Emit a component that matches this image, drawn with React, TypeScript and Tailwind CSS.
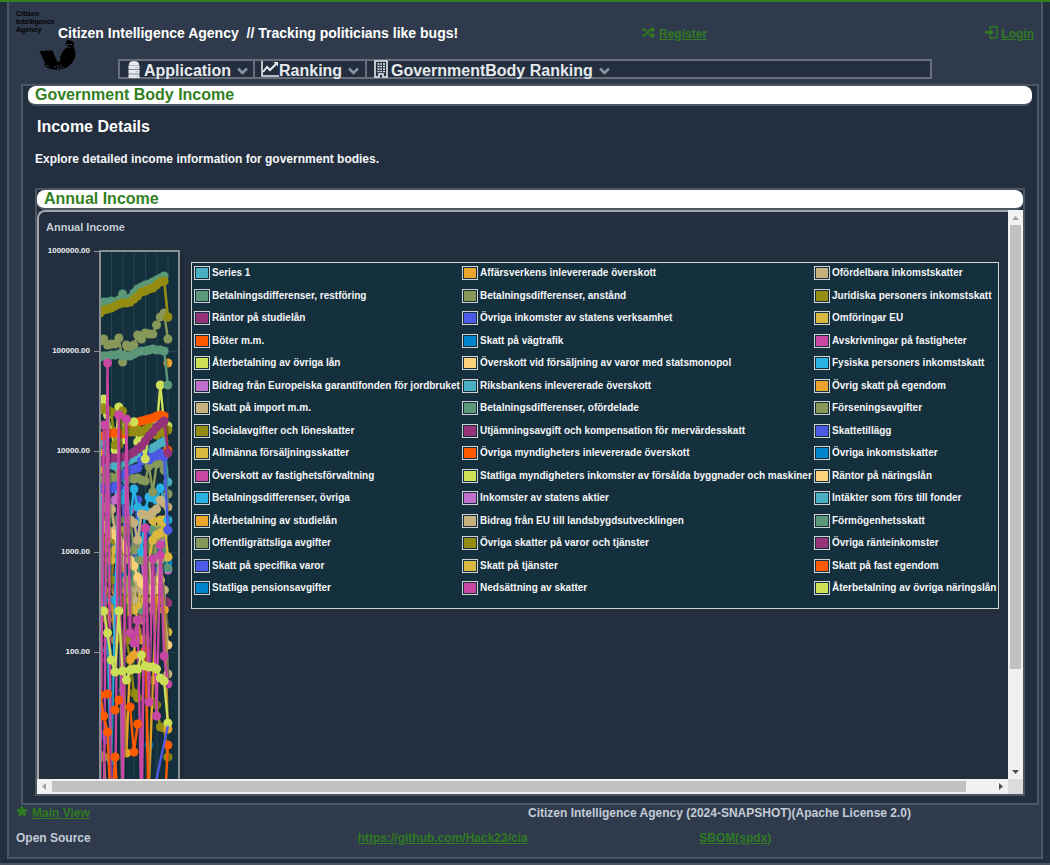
import React from "react";
import { FaRandom, FaStar } from "react-icons/fa";

const TEAL = "#4bafc4";
const GREEN = "#5b9779";
const PURPLE = "#943378";
const RED = "#ff5a00";
const LIME = "#ccdf56";
const VIOLET = "#c070cc";
const TAN = "#c6b07c";
const OLIVE = "#958c12";
const GOLD = "#dab83f";
const MAGENTA = "#c747a3";
const CYAN = "#29b1e2";
const ORANGE = "#eba42b";
const SAGE = "#87985a";
const BLUE = "#4d5ae5";
const AZURE = "#0085cc";
const PEACH = "#fdd07a";

const legend: [string, string][][] = [
  [[TEAL, "Series 1"], [ORANGE, "Affärsverkens inlevererade överskott"], [TAN, "Ofördelbara inkomstskatter"]],
  [[GREEN, "Betalningsdifferenser, restföring"], [SAGE, "Betalningsdifferenser, anstånd"], [OLIVE, "Juridiska personers inkomstskatt"]],
  [[PURPLE, "Räntor på studielån"], [BLUE, "Övriga inkomster av statens verksamhet"], [GOLD, "Omföringar EU"]],
  [[RED, "Böter m.m."], [AZURE, "Skatt på vägtrafik"], [MAGENTA, "Avskrivningar på fastigheter"]],
  [[LIME, "Återbetalning av övriga lån"], [PEACH, "Överskott vid försäljning av varor med statsmonopol"], [CYAN, "Fysiska personers inkomstskatt"]],
  [[VIOLET, "Bidrag från Europeiska garantifonden för jordbruket"], [TEAL, "Riksbankens inlevererade överskott"], [ORANGE, "Övrig skatt på egendom"]],
  [[TAN, "Skatt på import m.m."], [GREEN, "Betalningsdifferenser, ofördelade"], [SAGE, "Förseningsavgifter"]],
  [[OLIVE, "Socialavgifter och löneskatter"], [PURPLE, "Utjämningsavgift och kompensation för mervärdesskatt"], [BLUE, "Skattetillägg"]],
  [[GOLD, "Allmänna försäljningsskatter"], [RED, "Övriga myndigheters inlevererade överskott"], [AZURE, "Övriga inkomstskatter"]],
  [[MAGENTA, "Överskott av fastighetsförvaltning"], [LIME, "Statliga myndigheters inkomster av försålda byggnader och maskiner"], [PEACH, "Räntor på näringslån"]],
  [[CYAN, "Betalningsdifferenser, övriga"], [VIOLET, "Inkomster av statens aktier"], [TEAL, "Intäkter som förs till fonder"]],
  [[ORANGE, "Återbetalning av studielån"], [TAN, "Bidrag från EU till landsbygdsutvecklingen"], [GREEN, "Förmögenhetsskatt"]],
  [[SAGE, "Offentligrättsliga avgifter"], [OLIVE, "Övriga skatter på varor och tjänster"], [PURPLE, "Övriga ränteinkomster"]],
  [[BLUE, "Skatt på specifika varor"], [GOLD, "Skatt på tjänster"], [RED, "Skatt på fast egendom"]],
  [[AZURE, "Statliga pensionsavgifter"], [MAGENTA, "Nedsättning av skatter"], [LIME, "Återbetalning av övriga näringslån"]],
];

type Point = number | null;
const _ = null;

const series: [string, Point[]][] = [
  [ORANGE, [450, 470, 520, 560, 575, 610, 560, 640, 585, 560, 640, 600, 560, 570, 590, 600, 580, _, 363]],
  [GOLD, [480, 530, 572, 560, 610, 590, 530, 600, 620, 583, 605, 598, 560, 570, 520, 530, 520, 567, 557]],
  [GOLD, [755, 757, 820, _, 590, 550, 560, 600, 600, 600, 590, 620, 610, 590, 605, 600, 570, 590, 632]],
  [GREEN, [540, 550, 570, 560, 580, 600, 590, 560, 550, 600, 580, 590, 600, 570, 560, 580, 600, 590, _]],
  [VIOLET, [500, 520, 480, 510, 500, 495, 500, 560, 510, 570, 540, 560, 600, 590, 570, 580, 540, 560, 570]],
  [PURPLE, [660, 650, 640, 540, 600, 630, 690, 625, 620, 640, 630, 600, 640, 610, 560, 605, 590, 600, 603]],
  [AZURE, [440, 445, 490, 578, 579, 578, 577, 576, 560, 570, 560, 590, _, 745, _, 560, 550, 560, 563]],
  [BLUE, [735, 735, 740, 762, 820, _, 490, 560, 520, 560, 500, 530, 540, 530, 540, 560, 570, 550, 530]],
  [GREEN, [530, 540, 560, 550, 520, 560, 820, 520, 550, 570, 560, 610, 580, 560, 530, 560, 580, 550, 568]],
  [OLIVE, [500, 560, 600, 580, 540, 600, 600, 640, 660, 693, 698, 660, 640, 700, 702, 705, 727, 728, 757]],
  [SAGE, [500, 520, 540, 510, 530, 520, 540, 530, 520, 550, 540, 560, 550, 545, 550, 540, 530, 535, 494]],
  [GOLD, [560, 550, 540, 560, 550, 530, 545, 590, 600, 610, 605, 590, 600, 560, 540, 535, 533, 520, 557]],
  [TAN, [510, 508, 507, 509, 530, 545, 560, 580, 590, 600, 580, 590, 580, 560, 610, 580, 560, 590, 674]],
  [PEACH, [520, 525, 530, 533, 535, 540, 545, 550, 560, 566, 577, 583, 585, 590, 600, 590, 580, 610, 645]],
  [ORANGE, [570, 590, 620, 600, 640, 610, 640, 753, 659, 655, 620, 640, 640, 790, 680, 600, 600, 610, 729]],
  [CYAN, [500, 600, 650, 760, 600, 490, 500, 480, 520, 489, 507, 552, 510, 497, 498, 500, 488, 500, 520]],
  [TAN, [_, _, _, _, _, _, _, _, 520, 523, 540, 514, 515, 516, 512, 509, 500, 503, 507]],
  [SAGE, [480, 481, 480, 477, 478, 470, 476, 474, 478, 479, 478, 480, 481, 466, 492, 464, 463, 470, 494]],
  [TEAL, [443, 440, 465, 465, 466, 465, 463, 463, 460, 458, 457, 456, 454, 452, 448, 446, 443, 441, 482]],
  [BLUE, [487, 490, 488, 489, 486, 487, 475, 472, 470, 469, 468, 461, 455, 460, 457, 456, 453, 457, 530]],
  [LIME, [400, 399, 415, 430, 450, 407, 440, 425, 430, 422, 442, 440, 459, 430, 425, 430, 385, 424, 426]],
  [OLIVE, [410, 408, 410, 412, 445, 445, 411, 432, 432, 432, 431, 432, 430, 425, 433, 435, 432, 433, 430]],
  [RED, [436, 436, 434, 433, 433, 433, 434, 432, 430, 425, 422, 421, 420, 419, 418, 416, 415, 416, 450]],
  [OLIVE, [_, _, _, _, _, _, _, 431, 431, 431, 430, 431, 430, _, _, _, _, _, _]],
  [LIME, [_, _, _, _, _, _, _, _, _, 422, _, _, _, _, _, _, _, _, _]],
  [PURPLE, [462, 460, 460, 458, 458, 458, 457, 457, 454, 452, 449, 446, 441, 436, 432, 427, 424, 421, 453]],
  [SAGE, [341, 339, 345, 344, 344, 338, 362, 345, 347, 345, 335, 339, 333, 334, 334, 325, 317, 313, 339]],
  [GREEN, [357, 356, 356, 355, 355, 354, 355, 356, 356, 354, 352, 351, 351, 350, 349, 350, 350, 351, 385]],
  [GREEN, [304, 302, 302, 301, 302, 300, 294, 300, 298, 293, 289, 287, 285, 284, 282, 280, 278, 276, 317]],
  [OLIVE, [313, 310, 309, 308, 306, 304, 303, 303, 302, 299, 296, 292, 291, 289, 288, 285, 282, 281, 317]],
  [MAGENTA, [820, 425, _, _, _, _, _, _, _, _, _, _, _, _, _, _, _, _, _]],
  [MAGENTA, [_, 820, 363, 820, _, 415, 820, 419, 633, 643, 620, 820, 528, 702, 559, 716, 545, 656, 684]],
  [MAGENTA, [_, _, _, _, 820, 415, _, _, _, _, _, _, _, _, _, _, 555, _, _]],
  [RED, [695, 716, 732, 820, 757, 820, _, _, _, _, _, _, _, _, _, _, _, _, _]],
  [RED, [_, _, 694, _, 710, 700, _, _, 707, 752, 724, _, 650, 820, _, _, _, 820, 745]],
  [MAGENTA, [_, _, _, _, _, _, _, _, _, _, _, 820, 528, 702, _, _, _, _, _]],
  [LIME, [611, 611, 633, 660, 672, 611, 671, 680, 670, 669, 669, 655, 666, 667, 667, 669, 678, 681, 723]],
];

const px = (i: number) => 100 + i * 3.77;

function linePath(values: Point[]) {
  let d = "";
  let pen = false;
  values.forEach((v, i) => {
    if (v === null) {
      pen = false;
      return;
    }
    d += `${pen ? "L" : "M"}${px(i).toFixed(1)} ${v}`;
    pen = true;
  });
  return d;
}

function Chart() {
  const ticks: [number, string][] = [
    [251, "1000000.00"],
    [351, "100000.00"],
    [451, "10000.00"],
    [552, "1000.00"],
    [652, "100.00"],
  ];
  return (
    <svg className="block h-[540px] w-[145px] shrink-0" viewBox="39 239 145 540" role="img" aria-label="Annual Income chart">
      <defs>
        <clipPath id="plot">
          <rect x="100" y="251" width="79" height="540" />
        </clipPath>
      </defs>
      <rect x="180" y="253" width="3" height="540" fill="#1e2837" />
      <rect x="100" y="251" width="79" height="540" fill="#15303d" />
      {[111.5, 123, 134, 145.5, 157, 168].map((x) => (
        <path key={x} d={`M${x} 252V790`} stroke="#26434f" />
      ))}
      {ticks.map(([y, label]) => (
        <g key={y}>
          <path d={`M100 ${y + 0.5}H179`} stroke="#26434f" />
          <path d={`M94 ${y + 0.5}H99`} stroke="#8a9092" />
          <text x="90" y={y + 2} textAnchor="end" fill="#eef0f2" fontSize="8" fontWeight="700" fontFamily="Liberation Sans, sans-serif">
            {label}
          </text>
        </g>
      ))}
      <g clipPath="url(#plot)">
        {series.map(([color, values], s) => (
          <g key={s}>
            <path d={linePath(values)} fill="none" stroke="#0b1c26" strokeOpacity="0.25" strokeWidth="3" transform="translate(1.5 1.5)" />
            <path d={linePath(values)} fill="none" stroke={color} strokeWidth="2.4" strokeLinejoin="round" />
            {values.map((v, i) => (v === null ? null : <circle key={i} cx={px(i)} cy={v} r="4.5" fill={color} />))}
          </g>
        ))}
        <path d="M154 790L167.900 726" stroke={BLUE} strokeWidth="2.400" />
      </g>
      <path d="M100 790V251H179V790" fill="none" stroke="#8a9092" strokeWidth="2" />
    </svg>
  );
}

function Logo() {
  return (
    <div className="w-[42px] shrink-0 pt-2 text-[7px] leading-[8px] text-black">
      <div>Citizen</div>
      <div>Intelligence</div>
      <div>Agency</div>
      <svg className="ml-[22px] block h-9 w-10" viewBox="0 0 40 36" fill="#000" aria-hidden="true">
        <path d="M1.500 17L14.500 16.500L18 25L21 30L9 31L6 27Z" />
        <path d="M6 29C11 31 17 31 22 27C22 21 25 15 30 13L28 10C27 6 31 5 33 7C36 7 36.500 10 35.500 13C39 18 38 26 31 32C24 37 12 37 7 32Z" />
        <path d="M29 10.500H34M8 31.500L12 32.500M16 33L24 31M19 35L26 33M30 13L33 14" stroke="#56606c" strokeWidth="0.700" strokeDasharray="2 1" fill="none" />
      </svg>
    </div>
  );
}

function ServerIcon() {
  return (
    <svg className="mr-[3px] h-[18px] w-[14px]" viewBox="0 0 14 18" fill="#e6eaee" aria-hidden="true">
      <path d="M2 4C2 0 12 0 12 4V5H2Z" />
      <path d="M1.500 5.300H12.500V9.200H1.500ZM1.500 9.700H12.500V13.700H1.500ZM1.500 14.200H12.500V18H1.500Z" />
      <path d="M8.500 7.500H11M8.500 11.700H11M8.500 16H11" stroke="#a9b3be" strokeWidth="0.800" />
    </svg>
  );
}

function TrendIcon() {
  return (
    <svg className="h-[18px] w-[18px]" viewBox="0 0 18 18" fill="none" stroke="#e6eaee" strokeWidth="1.600" aria-hidden="true">
      <path d="M1 1V16H18" />
      <path d="M2 12L6 7L9 10L16 3" strokeWidth="2" />
      <path d="M12.500 2H17V6.500Z" fill="#e6eaee" stroke="none" />
    </svg>
  );
}

function BuildingIcon() {
  return (
    <svg className="mr-[3px] h-[18px] w-[14px]" viewBox="0 0 14 18" aria-hidden="true">
      <path d="M1 1H13V17H9V14H5V17H1Z" fill="none" stroke="#e6eaee" strokeWidth="1.600" />
      <path d="M3.500 4H5.500M6.300 4H8M9 4H11M3.500 6.500H5.500M6.300 6.500H8M9 6.500H11M3.500 9H5.500M6.300 9H8M9 9H11M3.500 11.500H5.500M6.300 11.500H8M9 11.500H11" stroke="#e6eaee" strokeWidth="1.500" />
    </svg>
  );
}

function LoginIcon() {
  return (
    <svg className="h-[13px] w-[13px]" viewBox="0 0 13 13" aria-hidden="true">
      <path d="M5 3V0.750H12.250V11.750H5V9.500" fill="none" stroke="currentColor" strokeWidth="1.300" />
      <path d="M0 5H4.500V2.500L9 6.250L4.500 10V7.500H0Z" fill="currentColor" />
    </svg>
  );
}

function Chevron() {
  return (
    <svg className="ml-[6px] h-[8px] w-[11px]" viewBox="0 0 11 8" fill="none" stroke="#8994a0" strokeWidth="2.600" aria-hidden="true">
      <path d="M1 1.500L5.500 6L10 1.500" />
    </svg>
  );
}

function MenuItem({ icon, label, className }: { icon: React.ReactNode; label: string; className: string }) {
  return (
    <button type="button" className={`flex h-4 items-center text-[16px] leading-4 text-[#e6eaee] ${className}`}>
      {icon}
      <span className="pt-[3px]">{label}</span>
      <span className="pt-[3px]">
        <Chevron />
      </span>
    </button>
  );
}

function Triangle({ d, color }: { d: string; color: string }) {
  return (
    <svg className="h-[15px] w-[15px] shrink-0" viewBox="0 0 15 15" fill={color} aria-hidden="true">
      <path d={d} />
    </svg>
  );
}

const link = "text-[#2f7a22] underline";

export default function App() {
  return (
    <div className="border-y-2 border-t-[#33801f] border-b-[#4a5462] bg-[#232e3e] px-[7px] pb-1 font-['Liberation_Sans',Arial,sans-serif] text-[12px] leading-4 font-bold text-[#c3ccd6]">
      <div className="border-x-2 border-b-2 border-[#4d5764] bg-[#2f3b4c] pb-[11px]">
        <header className="flex h-[57px] items-start pr-[7px] pl-[7px]">
          <Logo />
          <h1 className="pt-[22px] text-[14px] leading-[18px] whitespace-pre text-white">Citizen Intelligence Agency  // Tracking politicians like bugs!</h1>
          <div className="ml-auto flex w-[392px] justify-between pt-6">
            <a href="#register" className="flex gap-1 text-[#2f7a22]">
              <FaRandom className="text-[13px]" />
              <span className="underline">Register</span>
            </a>
            <a href="#login" className="flex gap-[3px] text-[#2f7a22]">
              <LoginIcon />
              <span className="underline">Login</span>
            </a>
          </div>
        </header>

        <nav className="mr-[109px] ml-[109px] flex h-5 border-2 border-[#666f7a] bg-[#232e3e]">
          <MenuItem icon={<ServerIcon />} label="Application" className="w-[135px] border-r-2 border-[#666f7a] pl-[7px]" />
          <MenuItem icon={<TrendIcon />} label="Ranking" className="w-[112px] border-r-2 border-[#666f7a] pl-[6px]" />
          <MenuItem icon={<BuildingIcon />} label="GovernmentBody Ranking" className="pl-[7px]" />
        </nav>

        <main className="mt-[5px] mr-[2px] ml-3 border-2 border-[#4d5764] bg-[#232e3e] pb-[7px]">
          <h2 className="mr-[5px] ml-[5px] h-5 rounded-lg border-b-2 border-[#4d5764] bg-white pl-[7px] text-[16px] leading-[18px] text-[#33801f]">Government Body Income</h2>
          <h3 className="mt-[11px] ml-[14px] text-[16px] leading-5 text-white">Income Details</h3>
          <p className="mt-[14px] ml-3 text-[#f4f6f8]">Explore detailed income information for government bodies.</p>

          <section className="mt-[21px] mr-3 ml-3 border-2 border-[#4d5764]">
            <h4 className="h-5 rounded-lg border-b-2 border-[#4d5764] bg-white pl-[7px] text-[16px] leading-[18px] text-[#33801f]">Annual Income</h4>
            <div className="flex h-[569px]">
              <div className="min-w-0 flex-1 overflow-hidden rounded-tl-lg border-t-2 border-l-2 border-[#a4a6a9]">
                <div className="h-[27px] pt-[7px] pl-[7px] text-[11px]">Annual Income</div>
                <div className="flex items-start">
                  <Chart />
                  <ul className="mt-[23px] mr-[9px] ml-[7px] grid h-[347px] min-w-0 flex-1 auto-rows-fr grid-cols-[268fr_352fr_184fr] border border-[#d2d2d2] bg-[#15303d] pb-[7px] pl-[2px] text-[10px] leading-[14px] whitespace-nowrap text-[#f4f6f8]">
                    {legend.flat().map(([color, label], i) => (
                      <li key={i} className="flex min-w-0 items-start gap-[2px] pt-[3px]">
                        <span className="h-[14px] w-4 shrink-0 border border-[#d2d2d2] p-px">
                          <span className="block h-full w-full" style={{ backgroundColor: color }} />
                        </span>
                        {label}
                      </li>
                    ))}
                  </ul>
                </div>
              </div>
              <div className="flex w-[15px] flex-col bg-[#f1f1f1]">
                <Triangle d="M4 10L7.500 6L11 10Z" color="#a3a3a3" />
                <div className="mx-[2px] h-[444px] bg-[#c1c1c1]" />
                <div className="mt-auto h-[15px]">
                  <Triangle d="M4 6L7.500 10L11 6Z" color="#505050" />
                </div>
              </div>
            </div>
            <div className="flex h-[15px] bg-[#f1f1f1]">
              <Triangle d="M9 4L5 7.500L9 11Z" color="#a3a3a3" />
              <div className="flex-1 py-[2px] pr-[27px]">
                <div className="h-full bg-[#c1c1c1]" />
              </div>
              <Triangle d="M6 4L10 7.500L6 11Z" color="#505050" />
              <div className="w-[15px] bg-[#dcdcdc]" />
            </div>
          </section>
        </main>

        <footer className="pl-[7px]">
          <div className="flex h-[25px]">
            <a href="#main" className="flex w-[512px] gap-1 text-[#2f7a22]">
              <FaStar className="text-[12px]" />
              <span className="underline">Main View</span>
            </a>
            <span>Citizen Intelligence Agency (2024-SNAPSHOT)(Apache License 2.0)</span>
          </div>
          <div className="grid grid-cols-3">
            <span>Open Source</span>
            <a href="https://github.com/Hack23/cia" className={link}>https://github.com/Hack23/cia</a>
            <a href="#sbom" className={link}>SBOM(spdx)</a>
          </div>
        </footer>
      </div>
    </div>
  );
}
